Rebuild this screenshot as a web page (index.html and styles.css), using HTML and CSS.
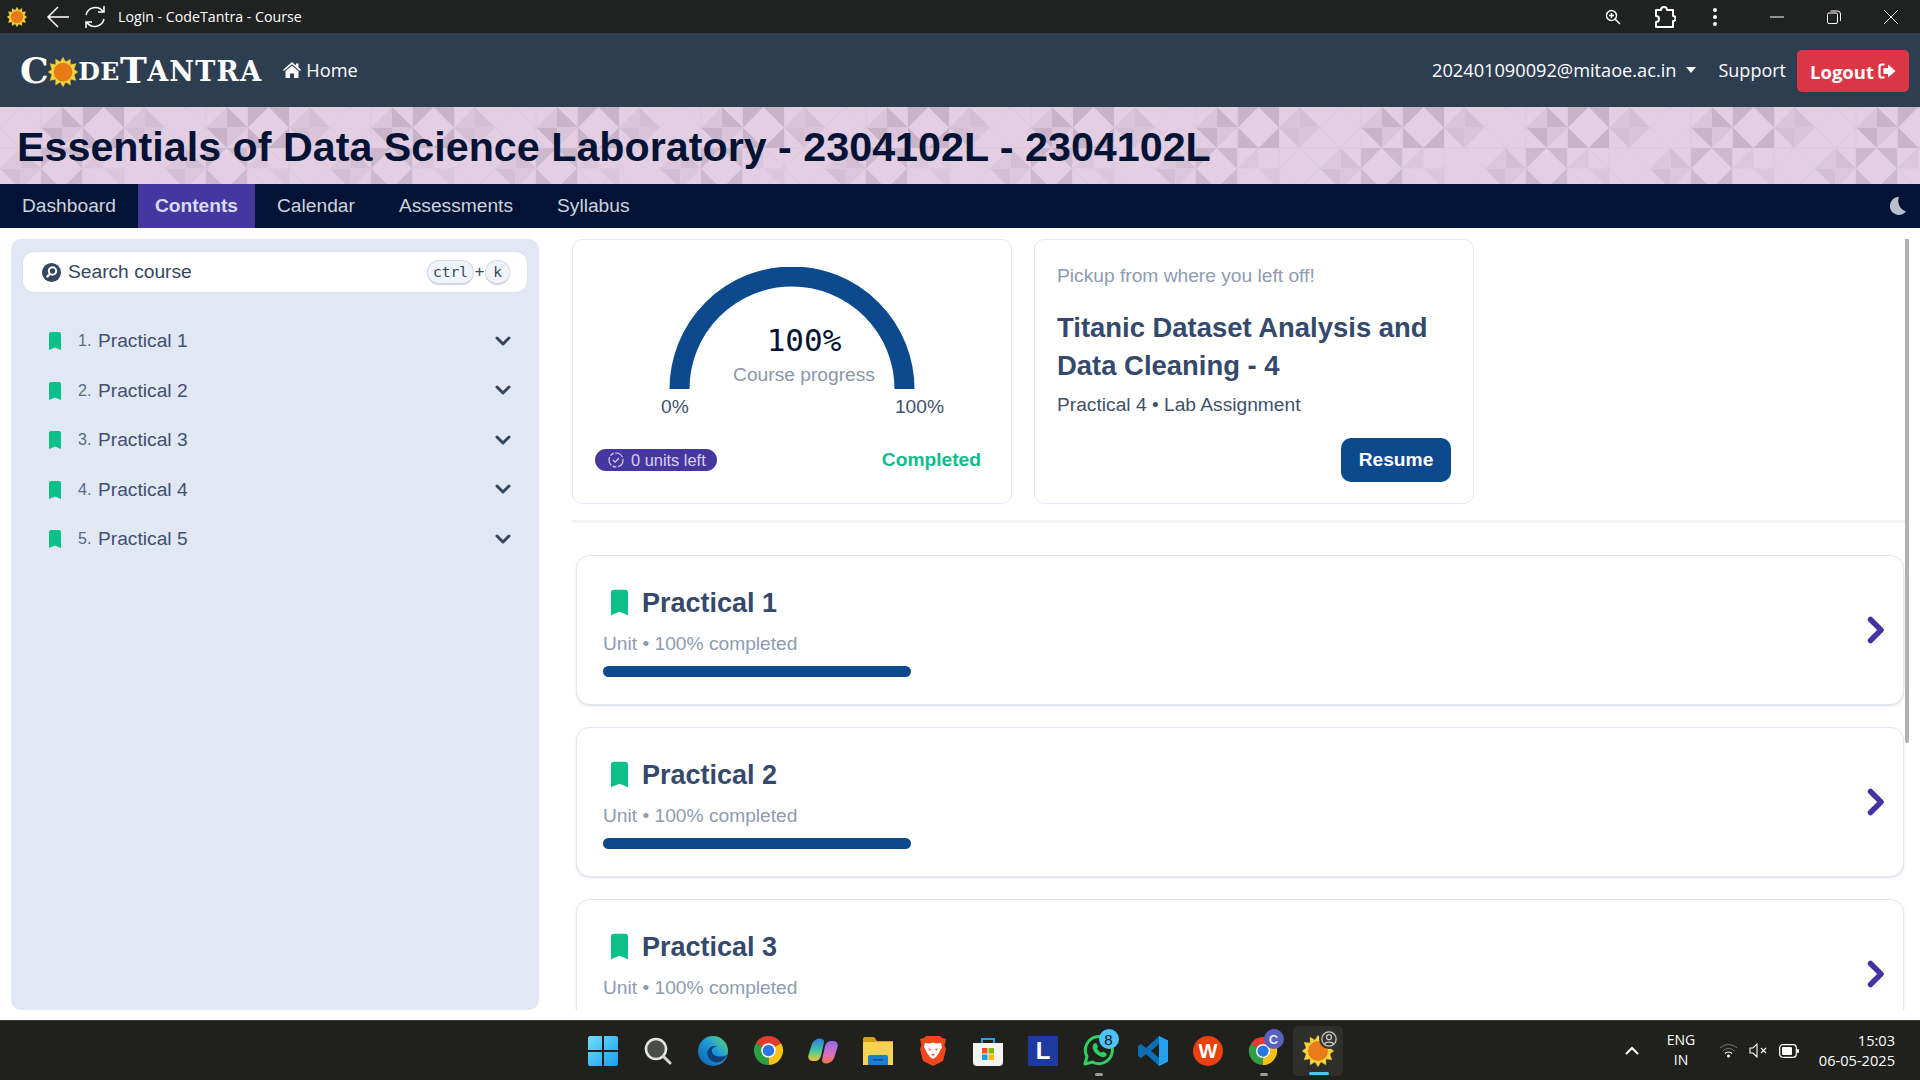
FILE: index.html
```html
<!DOCTYPE html>
<html lang="en">
<head>
  <meta charset="UTF-8">
  <title>Login - CodeTantra - Course</title>
  <link rel="stylesheet" href="styles.css">
</head>
<body>
  <svg class="defs" width="0" height="0">
    <symbol id="bookmark" viewBox="0 0 12 18">
      <path d="M0 2a2 2 0 0 1 2-2h8a2 2 0 0 1 2 2v16l-6-2.4L0 18z"/>
    </symbol>
    <symbol id="sun" viewBox="0 0 32 32">
      <path fill="#f2d43c" stroke="#b9982a" stroke-width=".4" d="M16 0l3 5 5-3 0 6 6-1-2 6 4 3-4 3 2 6-6-1 0 6-5-3-3 5-3-5-5 3 0-6-6 1 2-6-4-3 4-3-2-6 6 1 0-6 5 3z"/>
      <circle cx="16" cy="16" r="10" fill="#e87a18"/>
    </symbol>
    <symbol id="chevron-down" viewBox="0 0 16 11">
      <path d="M2 2l6 6 6-6" fill="none" stroke="currentColor" stroke-width="3" stroke-linecap="round" stroke-linejoin="round"/>
    </symbol>
    <symbol id="chevron-right" viewBox="0 0 18 28">
      <path d="M3.500 3.500L14 14 3.500 24.500" fill="none" stroke="currentColor" stroke-width="5.500" stroke-linecap="round" stroke-linejoin="round"/>
    </symbol>
    <symbol id="chrome" viewBox="0 0 32 32">
      <path fill="#e33b2e" d="M16 16L3 8.500A15 15 0 0 1 29 8.500z"/>
      <path fill="#fbc116" d="M16 16L29 8.500A15 15 0 0 1 16 31z"/>
      <path fill="#2f9e44" d="M16 16L16 31A15 15 0 0 1 3 8.500z"/>
      <circle cx="16" cy="16" r="7.500" fill="#fff"/>
      <circle cx="16" cy="16" r="6" fill="#2a77e4"/>
    </symbol>
  </svg>

  <div class="titlebar">
    <svg class="tb-sun" width="20" height="20"><use href="#sun"/></svg>
    <svg class="tb-back" width="24" height="24" viewBox="0 0 24 24" fill="none" stroke="#fff" stroke-width="1.500"><path d="M23 12H2M12 2L2 12l10 10"/></svg>
    <svg class="tb-reload" width="24" height="24" viewBox="0 0 24 24" fill="none" stroke="#fff" stroke-width="1.500"><path d="M3 10a9.500 9.500 0 0 1 17-3.500M21 14a9.500 9.500 0 0 1-17 3.500M21 1v6h-6M3 23v-6h6"/></svg>
    <span class="tb-title">Login - CodeTantra - Course</span>
    <div class="tb-actions">
      <svg width="16" height="16" viewBox="0 0 16 16" fill="none" stroke="#fff" stroke-width="1.500"><circle cx="6.500" cy="6.500" r="5"/><path d="M10 10l5 5M6.500 4v5M4 6.500h5"/></svg>
      <svg class="tb-puzzle" width="22" height="24" viewBox="0 0 22 24" fill="none" stroke="#fff" stroke-width="2"><path d="M2 5h5a3 3 0 0 1 6 0h6v6a2.500 2.500 0 0 1 0 5v6H2v-5a3 3 0 0 0 0-6z" stroke-linejoin="round"/></svg>
      <svg class="tb-dots" width="4" height="18" viewBox="0 0 4 18" fill="#fff"><circle cx="2" cy="2" r="2"/><circle cx="2" cy="9" r="2"/><circle cx="2" cy="16" r="2"/></svg>
    </div>
    <div class="tb-window">
      <svg width="14" height="14" viewBox="0 0 14 14" stroke="#fff"><path d="M0 7h14"/></svg>
      <svg width="14" height="14" viewBox="0 0 14 14" fill="none" stroke="#fff"><rect x=".5" y="3" width="10" height="10.500" rx="1.500"/><path d="M3.500 1h7a3 3 0 0 1 3 3v7"/></svg>
      <svg width="14" height="14" viewBox="0 0 14 14" stroke="#fff"><path d="M0 0l14 14M14 0L0 14"/></svg>
    </div>
  </div>

  <nav class="navbar">
    <a class="logo"><span class="logo-big">C</span><svg class="logo-sun" width="30" height="30"><use href="#sun"/></svg><span>DE</span><span class="logo-big">T</span><span class="logo-rest">ANTRA</span></a>
    <a class="home-link">
      <svg width="18" height="16" viewBox="0 0 18 16" fill="#fff"><path d="M9 0l4 3.400V1.500h2.500v4L18 7.700 17 9 9 2.300 1 9 0 7.700z"/><path d="M9 3.800L15.500 9v7H11v-4.500H7V16H2.500V9z"/></svg>
      Home
    </a>
    <div class="nav-right">
      <span class="nav-user">202401090092@mitaoe.ac.in<i class="caret"></i></span>
      <span class="nav-support">Support</span>
      <button class="btn-logout">Logout
        <svg width="18" height="16" viewBox="0 0 18 16"><path fill="none" stroke="#fff" stroke-width="2.200" d="M6.500 1.500H3.500a2 2 0 0 0-2 2v9a2 2 0 0 0 2 2h3"/><path fill="#fff" d="M10 1.500L17.500 8 10 14.500V11H5.500V5H10z"/></svg>
      </button>
    </div>
  </nav>

  <header class="banner">
    <svg class="banner-bg" width="100%" height="77">
      <defs>
        <pattern id="tiles" width="165" height="82" patternUnits="userSpaceOnUse">
          <g fill="none" stroke="#dcc7dd" stroke-width="1">
            <path d="M0 20.500L20.500 0 41 20.500 20.500 41zM124 61.500L144.500 41 165 61.500 144.500 82zM82 61.500L103 41 124 61.500 103 82z"/>
            <path d="M0 41H165M41 0V82M82 0V82M124 0V82"/>
          </g>
          <g fill="#c8b3c9">
            <path d="M83 0h20.500L83 20.500zM103.500 0H124v20.500zM83 20.500V41h20.500zM124 20.500V41h-20.500z"/>
            <path d="M62 0v20.500h21zM41 20.500h21V41z"/>
          </g>
          <g fill="#d9c4da">
            <path d="M41 20.500L62 0v20.500zM62 20.500h21L62 41zM124 20.500L144.500 0v20.500zM144.500 20.500H165L144.500 41z"/>
          </g>
          <g fill="#d3bed4">
            <path d="M144.500 0v20.500H165zM124 20.500h20.500V41z"/>
            <path d="M20.500 41v20.500H41zM0 61.500h20.500V82z"/>
          </g>
          <g fill="#cdb8ce">
            <path d="M41 41h20.500L41 61.500zM61.500 41H82v20.500zM41 61.500V82h20.500zM82 61.500V82H61.500z"/>
          </g>
          <g fill="#dbc6dc">
            <path d="M0 61.500L20.500 41v20.500zM20.500 61.500H41L20.500 82zM103.500 41v20.500H82zM103.500 61.500H124V82z"/>
          </g>
        </pattern>
      </defs>
      <rect width="100%" height="77" fill="url(#tiles)"/>
    </svg>
    <h1 class="course-title">Essentials of Data Science Laboratory - 2304102L - 2304102L</h1>
  </header>

  <div class="tabs">
    <a class="tab">Dashboard</a>
    <a class="tab active">Contents</a>
    <a class="tab">Calendar</a>
    <a class="tab">Assessments</a>
    <a class="tab">Syllabus</a>
    <svg class="moon" width="16" height="18" viewBox="0 0 16 18" fill="#b9c0cd"><path d="M9 0a9 9 0 1 0 7 14.500A11 11 0 0 1 9 0z"/></svg>
  </div>

  <div class="workspace">
    <aside class="sidebar">
      <div class="search">
        <svg width="19" height="19" viewBox="0 0 19 19"><circle cx="9.500" cy="9.500" r="9.500" fill="#34465f"/><circle cx="10.500" cy="8" r="3.700" fill="none" stroke="#fff" stroke-width="2"/><path d="M8 10.800l-3.200 3.400" stroke="#fff" stroke-width="2.400"/></svg>
        <span class="search-text">Search course</span>
        <span class="keys"><kbd class="key-ctrl">ctrl</kbd><b>+</b><kbd class="key-k">k</kbd></span>
      </div>
      <ul class="unit-list">
        <li class="unit-item"><svg class="mark" width="12" height="18"><use href="#bookmark"/></svg><span class="num">1.</span><span class="unit-name">Practical 1</span><svg class="down" width="16" height="11"><use href="#chevron-down"/></svg></li>
        <li class="unit-item"><svg class="mark" width="12" height="18"><use href="#bookmark"/></svg><span class="num">2.</span><span class="unit-name">Practical 2</span><svg class="down" width="16" height="11"><use href="#chevron-down"/></svg></li>
        <li class="unit-item"><svg class="mark" width="12" height="18"><use href="#bookmark"/></svg><span class="num">3.</span><span class="unit-name">Practical 3</span><svg class="down" width="16" height="11"><use href="#chevron-down"/></svg></li>
        <li class="unit-item"><svg class="mark" width="12" height="18"><use href="#bookmark"/></svg><span class="num">4.</span><span class="unit-name">Practical 4</span><svg class="down" width="16" height="11"><use href="#chevron-down"/></svg></li>
        <li class="unit-item"><svg class="mark" width="12" height="18"><use href="#bookmark"/></svg><span class="num">5.</span><span class="unit-name">Practical 5</span><svg class="down" width="16" height="11"><use href="#chevron-down"/></svg></li>
      </ul>
    </aside>

    <main class="content">
      <div class="top-cards">
        <section class="card progress-card">
          <div class="gauge">
            <svg width="246" height="122" viewBox="0 0 246 122"><path d="M10.500 122a112.500 112.500 0 0 1 225 0" fill="none" stroke="#0d4a8d" stroke-width="20"/></svg>
            <div class="gauge-label">
              <div class="gauge-value">100%</div>
              <div class="gauge-caption">Course progress</div>
            </div>
          </div>
          <div class="gauge-scale"><span>0%</span><span>100%</span></div>
          <div class="progress-foot">
            <span class="pill">
              <svg width="16" height="16" viewBox="0 0 16 16" fill="none" stroke="#d9d0ef" stroke-width="1.200"><circle cx="8" cy="8" r="7" stroke-dasharray="9 1.500 4 1.500"/><path d="M5 8l2.200 2.200L11 6"/></svg>
              0 units left
            </span>
            <span class="done">Completed</span>
          </div>
        </section>

        <section class="card resume-card">
          <div class="resume-hint">Pickup from where you left off!</div>
          <h2 class="resume-title">Titanic Dataset Analysis and Data Cleaning - 4</h2>
          <div class="resume-sub">Practical 4 • Lab Assignment</div>
          <button class="btn-resume">Resume</button>
        </section>
      </div>

      <div class="divider"></div>

      <div class="practicals">
        <article class="practical">
          <div>
            <div class="practical-head"><svg class="mark" width="17" height="27"><use href="#bookmark"/></svg><h3>Practical 1</h3></div>
            <div class="practical-sub">Unit • 100% completed</div>
            <div class="bar"></div>
          </div>
          <svg class="go" width="18" height="28"><use href="#chevron-right"/></svg>
        </article>
        <article class="practical">
          <div>
            <div class="practical-head"><svg class="mark" width="17" height="27"><use href="#bookmark"/></svg><h3>Practical 2</h3></div>
            <div class="practical-sub">Unit • 100% completed</div>
            <div class="bar"></div>
          </div>
          <svg class="go" width="18" height="28"><use href="#chevron-right"/></svg>
        </article>
        <article class="practical">
          <div>
            <div class="practical-head"><svg class="mark" width="17" height="27"><use href="#bookmark"/></svg><h3>Practical 3</h3></div>
            <div class="practical-sub">Unit • 100% completed</div>
            <div class="bar"></div>
          </div>
          <svg class="go" width="18" height="28"><use href="#chevron-right"/></svg>
        </article>
      </div>
      <div class="scroll-thumb"></div>
    </main>
  </div>

  <footer class="taskbar">
    <div class="task-icons">
      <div class="task-slot">
        <svg width="30" height="30" viewBox="0 0 30 30">
          <defs><linearGradient id="win" x1="0" y1="0" x2="1" y2="1"><stop offset="0" stop-color="#6fdcfb"/><stop offset="1" stop-color="#1a9ff0"/></linearGradient></defs>
          <path fill="url(#win)" d="M0 2a2 2 0 0 1 2-2h12v14H0zM16 0h12a2 2 0 0 1 2 2v12H16zM0 16h14v14H2a2 2 0 0 1-2-2zM16 16h14v12a2 2 0 0 1-2 2H16z"/>
        </svg>
      </div>
      <div class="task-slot">
        <svg width="28" height="28" viewBox="0 0 28 28"><circle cx="12" cy="12" r="10" fill="#4a4c47" stroke="#e4e4e4" stroke-width="2.600"/><path d="M19.500 19.500L26 26" stroke="#d5d5d5" stroke-width="3" stroke-linecap="round"/></svg>
      </div>
      <div class="task-slot">
        <svg width="30" height="30" viewBox="0 0 30 30">
          <defs><linearGradient id="edge" x1="0" y1="1" x2="1" y2="0"><stop offset="0" stop-color="#0b5fb0"/><stop offset=".55" stop-color="#1f9ad8"/><stop offset="1" stop-color="#5fe06a"/></linearGradient></defs>
          <circle cx="15" cy="15" r="15" fill="url(#edge)"/>
          <path fill="#0c3f78" d="M30 17c-1 3-5 4-9 3.500-5-.5-8-3.500-7-7 .5-2 3-3.500 5.500-3-4-1.500-9 .5-10 5-1 5 3 11 9 11 5 0 10-4 11.500-9.500z"/>
        </svg>
      </div>
      <div class="task-slot"><svg width="31" height="31"><use href="#chrome"/></svg></div>
      <div class="task-slot">
        <svg width="30" height="26" viewBox="0 0 30 26">
          <defs>
            <linearGradient id="cop1" x1="0" y1="0" x2="0" y2="1"><stop offset="0" stop-color="#2c7de0"/><stop offset=".55" stop-color="#45c8a0"/><stop offset="1" stop-color="#f6c531"/></linearGradient>
            <linearGradient id="cop2" x1="0" y1="0" x2="0" y2="1"><stop offset="0" stop-color="#8a6ce8"/><stop offset=".6" stop-color="#e06ec0"/><stop offset="1" stop-color="#f0743c"/></linearGradient>
          </defs>
          <path fill="url(#cop1)" d="M11 .500c3-.5 5 1 5 3.500l-3 14c-1 3-3 5-6 5H5c-4 0-5.500-3-4.500-6L3 9c1-4 3-7.500 8-8.500z"/>
          <path fill="url(#cop2)" d="M19 25.500c-3 .5-5-1-5-3.500l3-14c1-3 3-5 6-5h2c4 0 5.500 3 4.500 6L27 17c-1 4-3 7.500-8 8.500z"/>
        </svg>
      </div>
      <div class="task-slot">
        <svg width="30" height="28" viewBox="0 0 30 28">
          <path fill="#d5a216" d="M0 2a2 2 0 0 1 2-2h9l3 4h16v6H0z"/>
          <path fill="#f8d254" d="M0 5h30v23H0z"/>
          <path fill="#1a7fcf" d="M5 20a2 2 0 0 1 2-2h16a2 2 0 0 1 2 2v8H5z"/>
          <path fill="#0b4f93" d="M10 22h10v1.500H10z"/>
        </svg>
      </div>
      <div class="task-slot">
        <svg width="26" height="30" viewBox="0 0 26 30">
          <path fill="#f1471d" d="M6 0h14l2 2 4 1-1.500 6L26 13l-3 12-10 5-10-5L0 13l1.500-4L0 3l4-1z"/>
          <path fill="#fff" d="M5 7l5 .5 3-1 3 1 5-.5 1 4-3 6-3 4-3 2-3-2-3-4-3-6z"/>
          <path fill="#f1471d" d="M8 12l3 1.500-1 1.500zM18 12l-3 1.500 1 1.500zM11 18h4l-2 2z"/>
        </svg>
      </div>
      <div class="task-slot">
        <svg width="30" height="30" viewBox="0 0 30 30">
          <path fill="none" stroke="#2aa4df" stroke-width="2" d="M9 8V3h12v5"/>
          <path fill="#f4f4f2" d="M0 7h30v19a4 4 0 0 1-4 4H4a4 4 0 0 1-4-4z"/>
          <path fill="#f25022" d="M9 12h5.500v5.500H9z"/><path fill="#7fba00" d="M15.500 12H21v5.500h-5.500z"/>
          <path fill="#00a4ef" d="M9 18.500h5.500V24H9z"/><path fill="#ffb900" d="M15.500 18.500H21V24h-5.500z"/>
        </svg>
      </div>
      <div class="task-slot"><span class="app-l">L</span></div>
      <div class="task-slot running">
        <svg width="31" height="31" viewBox="0 0 31 31">
          <path fill="none" stroke="#2ed05e" stroke-width="3" d="M2 29l2-7.500A13.500 13.500 0 1 1 9.500 27z" stroke-linejoin="round"/>
          <path fill="#2ed05e" d="M11 8.500c1-.8 2-.8 2.500 0l1.300 2.700c.2.600 0 1.100-.8 2 1 2 2.400 3.500 4.500 4.500.9-1 1.400-1.200 2-.9l2.600 1.400c.8.500.7 1.700-.1 2.700-1.300 1.500-3 1.600-5 .8-4-1.500-7-4.500-8.200-8.200-.6-2-.2-3.700 1.700-5z"/>
        </svg>
        <span class="badge badge-blue">8</span>
      </div>
      <div class="task-slot">
        <svg width="30" height="30" viewBox="0 0 30 30">
          <path fill="#0c6fb5" d="M21 0l9 4.500v21L21 30 8 18 3 22 0 20v-10l3-2 5 4z"/>
          <path fill="#23a1ee" d="M21 0l9 4.500v21L21 30z"/>
          <path fill="#20211c" d="M21 8l-8 7 8 7z"/>
          <path fill="#0c6fb5" d="M3.500 11.500L7.500 15l-4 3.500z" opacity=".2"/>
        </svg>
      </div>
      <div class="task-slot"><span class="app-wps">W</span></div>
      <div class="task-slot running">
        <svg width="30" height="30"><use href="#chrome"/></svg>
        <span class="badge badge-purple">C</span>
      </div>
      <div class="task-slot current">
        <svg width="32" height="32"><use href="#sun"/></svg>
        <span class="badge badge-profile">
          <svg width="16" height="16" viewBox="0 0 13 13" fill="none" stroke="#c9c9c9" stroke-width="1"><circle cx="6.500" cy="6.500" r="5.800"/><circle cx="6.500" cy="5" r="2"/><path d="M2.800 10.500c1-2 6.400-2 7.400 0"/></svg>
        </span>
      </div>
    </div>

    <div class="tray">
      <svg class="tray-up" width="14" height="9" viewBox="0 0 14 9" fill="none" stroke="#fff" stroke-width="2"><path d="M1 8l6-6 6 6"/></svg>
      <div class="tray-lang">ENG<br>IN</div>
      <svg class="tray-wifi" width="19" height="15" viewBox="0 0 19 15" fill="none"><path d="M1 5a12 12 0 0 1 17 0M3.500 8a8.500 8.500 0 0 1 12 0" stroke="#777"/><path d="M6 10.500a5 5 0 0 1 7 0" stroke="#fff" stroke-width="1.300"/><circle cx="9.500" cy="13" r="1.500" fill="#fff"/></svg>
      <svg class="tray-sound" width="19" height="15" viewBox="0 0 19 15" fill="none" stroke="#fff" stroke-width="1.100"><path d="M1 5h3l4-4v13l-4-4H1z"/><path d="M12 5l5 5M17 5l-5 5"/></svg>
      <svg class="tray-batt" width="20" height="14" viewBox="0 0 20 14"><rect x=".7" y=".7" width="16.600" height="12.600" rx="3" fill="none" stroke="#fff" stroke-width="1.200"/><rect x="3" y="3" width="10" height="8" rx="1" fill="#fff"/><rect x="18" y="5" width="2" height="4" rx="1" fill="#fff"/></svg>
      <div class="tray-clock">15:03<br>06-05-2025</div>
    </div>
  </footer>
</body>
</html>
```

FILE: styles.css
```css
* {
  box-sizing: border-box;
  margin: 0;
  padding: 0;
}

html, body {
  width: 1920px;
  height: 1080px;
  overflow: hidden;
}

body {
  display: flex;
  flex-direction: column;
  background: #fff;
  font-family: "Liberation Sans", Arial, sans-serif;
  font-size: 19.2px;
  color: #34465f;
}

.defs {
  position: absolute;
}

/* browser title bar */
.titlebar {
  height: 33px;
  flex-shrink: 0;
  display: flex;
  align-items: center;
  background: #202221;
  color: #fff;
}

.tb-sun {
  margin-left: 7px;
}

.tb-back {
  margin-left: 19px;
}

.tb-reload {
  margin-left: 13px;
}

.tb-title {
  margin-left: 11px;
  font-family: "Open Sans", sans-serif;
  font-size: 14.200px;
}

.tb-actions {
  margin-left: auto;
  display: flex;
  align-items: center;
}

.tb-puzzle {
  margin-left: 33px;
}

.tb-dots {
  margin-left: 37px;
}

.tb-window {
  display: flex;
  align-items: center;
  gap: 43px;
  margin-left: 53px;
  margin-right: 22px;
}

/* site header */
.navbar {
  height: 74px;
  flex-shrink: 0;
  display: flex;
  align-items: center;
  padding: 0 11px 0 20px;
  background: #2d3e51;
  color: #fff;
  font-family: "Open Sans", sans-serif;
}

.logo {
  display: flex;
  align-items: flex-end;
  font-family: "DejaVu Serif", serif;
  font-weight: 700;
  font-size: 25px;
  line-height: 30px;
  letter-spacing: 0.5px;
  color: #fff;
}

.logo-big {
  font-size: 36px;
  line-height: 34px;
}

.logo-rest {
  font-size: 27px;
  letter-spacing: 1.200px;
}

.logo-sun {
  margin: 0 0 0 -1px;
}

.home-link {
  display: flex;
  align-items: center;
  gap: 5px;
  margin-left: 21px;
  font-size: 18.200px;
}

.nav-right {
  margin-left: auto;
  display: flex;
  align-items: center;
}

.nav-user {
  display: flex;
  align-items: center;
  font-size: 18.200px;
}

.caret {
  margin-left: 10px;
  border-top: 6px solid #fff;
  border-left: 5px solid transparent;
  border-right: 5px solid transparent;
}

.nav-support {
  margin-left: 22px;
  font-size: 18px;
}

.btn-logout {
  display: flex;
  align-items: center;
  justify-content: center;
  gap: 4px;
  width: 112px;
  height: 42px;
  margin: 2px 0 0 11px;
  border: 0;
  border-radius: 5px;
  background: #dc3545;
  color: #fff;
  font-family: "Open Sans", sans-serif;
  font-size: 18.500px;
  font-weight: 700;
}

/* course banner */
.banner {
  position: relative;
  height: 77px;
  flex-shrink: 0;
  display: flex;
  align-items: center;
  padding: 4px 0 0 17px;
  background: #e3cee4;
  overflow: hidden;
}

.banner-bg {
  position: absolute;
  left: 0;
  top: 0;
}

.course-title {
  position: relative;
  font-size: 41.250px;
  font-weight: 700;
  color: #021335;
  white-space: nowrap;
}

/* tabs */
.tabs {
  height: 44px;
  flex-shrink: 0;
  display: flex;
  align-items: stretch;
  padding-left: 0;
  background: #021335;
}

.tab {
  display: flex;
  align-items: center;
  padding: 0 22px;
  color: #cdd3df;
}

.tab.active {
  padding: 0 17px;
  background: #4637a0;
  color: #d8dcf0;
  font-weight: 700;
}

.moon {
  margin: 13px 14px 0 auto;
}

/* page body */
.workspace {
  height: 792px;
  flex-shrink: 0;
  display: flex;
  gap: 33px;
  padding: 11px 11px 10px;
}

.sidebar {
  width: 528px;
  flex-shrink: 0;
  padding: 12px 11px;
  border-radius: 10px;
  background: #e1e7f3;
}

.search {
  height: 42px;
  display: flex;
  align-items: center;
  gap: 7px;
  padding: 0 17px 0 19px;
  border: 1px solid #dbe1ee;
  border-radius: 12px;
  background: #fff;
}

.keys {
  margin-left: auto;
  display: flex;
  align-items: center;
}

.keys b {
  width: 11px;
  font-weight: 400;
  font-size: 17px;
  text-align: center;
}

kbd {
  height: 25px;
  border: 1px solid #cfd7e8;
  border-bottom-width: 2px;
  border-radius: 12px;
  background: #f0f4fc;
  font-family: "DejaVu Sans Mono", monospace;
  font-size: 14.500px;
  line-height: 22px;
  text-align: center;
  color: #34465f;
}

.key-ctrl {
  width: 47px;
}

.key-k {
  width: 25px;
}

.unit-list {
  list-style: none;
  margin-top: 23.500px;
}

.unit-item {
  height: 49.500px;
  display: flex;
  align-items: center;
  padding: 0 17px 0 27px;
}

.mark {
  fill: #0cc08a;
  flex-shrink: 0;
}

.num {
  width: 20px;
  margin-left: 17px;
  font-size: 16px;
  color: #5a6a84;
}

.unit-name {
  color: #3f5070;
}

.down {
  margin-left: auto;
  color: #34465f;
}

.content {
  position: relative;
  flex: 1;
  min-width: 0;
  overflow: hidden;
}

.top-cards {
  display: flex;
  gap: 22px;
}

.card {
  width: 440px;
  height: 265px;
  border: 1px solid #e4e8f3;
  border-radius: 10px;
  background: #fff;
}

/* progress gauge */
.progress-card {
  padding-top: 27px;
}

.gauge {
  position: relative;
  width: 246px;
  height: 122px;
  margin-left: 96px;
}

.gauge svg {
  display: block;
}

.gauge-label {
  position: absolute;
  left: 19px;
  top: 55px;
  width: 232px;
  text-align: center;
}

.gauge-value {
  font-family: "DejaVu Sans Mono", monospace;
  font-size: 31px;
  line-height: 36px;
  color: #021335;
}

.gauge-caption {
  margin-top: 6px;
  line-height: 22px;
  color: #8a96aa;
}

.gauge-scale {
  display: flex;
  justify-content: space-between;
  width: 283px;
  margin: 7px 0 0 88px;
  line-height: 22px;
  color: #3f5070;
}

.progress-foot {
  display: flex;
  justify-content: space-between;
  align-items: center;
  margin-top: 31px;
  padding: 0 30px 0 22px;
}

.pill {
  display: flex;
  align-items: center;
  gap: 7px;
  height: 22px;
  padding: 0 11px 0 13px;
  border-radius: 11px;
  background: #4637a0;
  color: #d9d0ef;
  font-size: 16.400px;
}

.done {
  font-weight: 700;
  color: #0dbd8b;
}

/* resume card */
.resume-card {
  display: flex;
  flex-direction: column;
  padding: 25px 22px 0;
}

.resume-hint {
  line-height: 22px;
  color: #8f9bb0;
}

.resume-title {
  margin-top: 22px;
  font-size: 27.450px;
  line-height: 38px;
  font-weight: 700;
  color: #34496b;
}

.resume-sub {
  margin-top: 9px;
  line-height: 22px;
  color: #3f4f6b;
}

.btn-resume {
  align-self: flex-end;
  width: 110px;
  height: 44px;
  margin-top: 22px;
  border: 0;
  border-radius: 10px;
  background: #0d4a8d;
  color: #fff;
  font-family: "Liberation Sans", Arial, sans-serif;
  font-size: 19.2px;
  font-weight: 700;
}

.divider {
  height: 3px;
  margin: 16px 4px 0 0;
  background: #f2f4f8;
}

/* unit cards */
.practicals {
  display: flex;
  flex-direction: column;
  gap: 22px;
  margin: 32px 5px 0 4px;
}

.practical {
  height: 150px;
  flex-shrink: 0;
  display: flex;
  justify-content: space-between;
  align-items: center;
  padding: 0 18px 0 26px;
  border: 1px solid #e4e8f3;
  border-radius: 14px;
  background: #fff;
  box-shadow: 0 1px 2px rgba(110, 125, 170, 0.25);
}

.practical-head {
  display: flex;
  align-items: center;
  gap: 14px;
  height: 34px;
  padding-left: 8px;
}

.practical-head .mark {
  margin-top: 4px;
}

.practical-head h3 {
  padding-top: 4px;
  font-size: 27px;
  line-height: 30px;
  font-weight: 700;
  color: #34496b;
}

.practical-sub {
  margin-top: 15px;
  line-height: 22px;
  color: #8f9bb0;
}

.bar {
  width: 308px;
  height: 11px;
  margin-top: 11px;
  border-radius: 6px;
  background: #0d4a8d;
}

.go {
  color: #4533a0;
}

.scroll-thumb {
  position: absolute;
  right: 0;
  top: 0;
  width: 4px;
  height: 504px;
  border-radius: 0 0 2px 2px;
  background: #b0b0b0;
}

/* windows taskbar */
.taskbar {
  position: relative;
  height: 60px;
  flex-shrink: 0;
  display: flex;
  justify-content: center;
  align-items: center;
  border-top: 1px solid #3a3b36;
  background: #20211c;
  color: #fff;
}

.task-icons {
  display: flex;
  align-items: center;
  margin-left: 1px;
}

.task-slot {
  position: relative;
  isolation: isolate;
  width: 55px;
  height: 50px;
  display: flex;
  align-items: center;
  justify-content: center;
}

.task-slot.running::after {
  content: "";
  position: absolute;
  left: 24px;
  bottom: 0;
  width: 8px;
  height: 3px;
  border-radius: 2px;
  background: #9a9a98;
}

.task-slot.current::before {
  content: "";
  position: absolute;
  z-index: -1;
  left: 2.500px;
  top: 0;
  width: 50px;
  height: 50px;
  border-radius: 5px;
  background: #2e2f2a;
}

.task-slot.current::after {
  content: "";
  position: absolute;
  left: 18px;
  bottom: 1px;
  width: 20px;
  height: 3px;
  border-radius: 2px;
  background: #4cc2ff;
}

.app-l {
  width: 30px;
  height: 30px;
  background: #1e3aa0;
  color: #fff;
  font-weight: 700;
  font-size: 24px;
  line-height: 30px;
  text-align: center;
}

.app-wps {
  width: 30px;
  height: 30px;
  border-radius: 50%;
  background: #e8400f;
  color: #fff;
  font-weight: 700;
  font-size: 20px;
  line-height: 30px;
  text-align: center;
}

.badge {
  position: absolute;
  top: 3.500px;
  right: 7px;
  width: 20px;
  height: 20px;
  border-radius: 50%;
  display: flex;
  align-items: center;
  justify-content: center;
  font-size: 15px;
}

.badge-blue {
  background: #4cc2ff;
  color: #111;
}

.badge-purple {
  background: #5a62c0;
  color: #e6e8ff;
  font-weight: 700;
  font-size: 13px;
}

.badge-profile {
  background: #33332f;
}

.tray {
  position: absolute;
  right: 25px;
  top: 0;
  height: 59px;
  display: flex;
  align-items: center;
  font-family: "Open Sans", sans-serif;
  font-size: 14px;
  line-height: 20px;
}

.tray-lang {
  margin: -2px 0 0 27px;
  width: 30px;
  text-align: center;
}

.tray-wifi {
  margin-left: 23px;
}

.tray-sound {
  margin-left: 11px;
}

.tray-batt {
  margin-left: 11px;
}

.tray-clock {
  width: 80px;
  margin: -2px 0 0 16px;
  font-size: 14.600px;
  text-align: right;
}
```
